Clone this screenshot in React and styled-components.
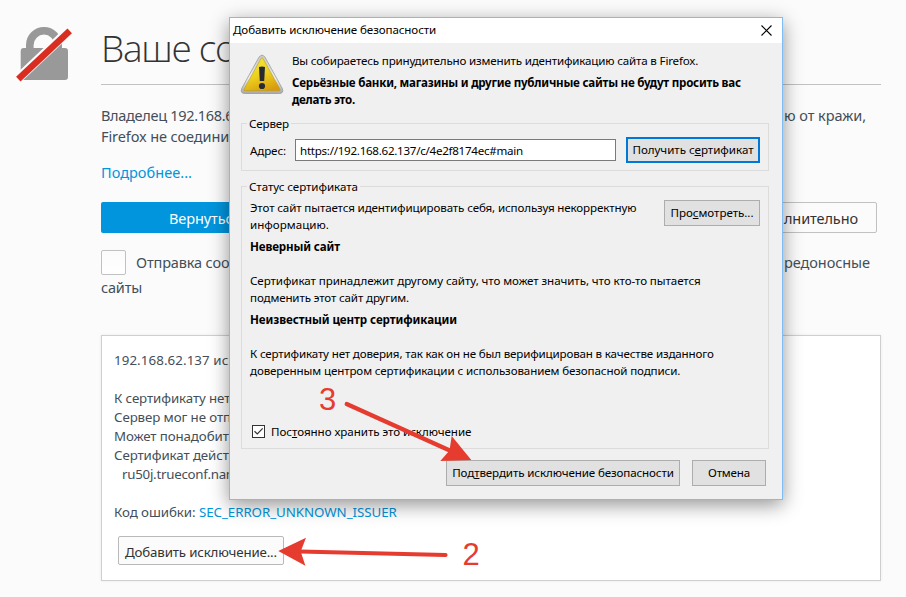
import React from "react";
import styled, { createGlobalStyle } from "styled-components";

const GlobalStyle = createGlobalStyle`
  * { box-sizing: border-box; }
  body {
    margin: 0;
    background: #fbfbfb;
    font-family: "Noto Sans", "Open Sans", sans-serif;
  }
  p, h1, h2 { margin: 0; font-weight: 400; }
`;

/* ---------- error page ---------- */

const Screen = styled.div`
  position: relative;
  width: 906px;
  height: 597px;
  overflow: hidden;
  background: #fbfbfb;
`;

const Page = styled.main`
  display: grid;
  grid-template-columns: 85px 780px;
  column-gap: 0;
  padding-left: 16px;
`;

const LockColumn = styled.div`
  padding-top: 25px;
  svg { display: block; }
`;

const Content = styled.div`
  display: flex;
  flex-direction: column;
  padding-top: 24px;
`;

const Heading = styled.h1`
  height: 61px;
  border-bottom: 1px solid #c1c1c1;
  font: 300 37px/48px "Open Sans", "Noto Sans", sans-serif;
  letter-spacing: -1.3px;
  color: #333;
`;

const Intro = styled.div`
  display: flex;
  flex-direction: column;
  padding-top: 20px;
`;

const PageLine = styled.div`
  display: flex;
  justify-content: space-between;
  align-items: center;
  width: ${(p) => p.$width || 780}px;
  height: ${(p) => p.$height || 21}px;
`;

const Copy = styled.span`
  font-size: ${(p) => p.$size || 14.5}px;
  line-height: ${(p) => p.$line || 21}px;
  letter-spacing: ${(p) => p.$track || 0}px;
  color: ${(p) => p.$color || "#424f5a"};
  white-space: pre;
`;

const MoreLink = styled.a`
  margin-top: 15px;
  font-size: 14.5px;
  line-height: 21px;
  letter-spacing: 0.04px;
  color: #0095dd;
`;

const Actions = styled.div`
  display: flex;
  justify-content: space-between;
  width: 776px;
  margin-top: 19px;
`;

const PageButton = styled.button`
  display: flex;
  align-items: center;
  justify-content: ${(p) => (p.$primary ? "flex-start" : "flex-end")};
  width: ${(p) => (p.$primary ? 300 : 150)}px;
  height: 31px;
  padding: ${(p) => (p.$primary ? "2px 0 0 68px" : "2px 18px 0 0")};
  border: ${(p) => (p.$primary ? "0" : "1px solid #c1c1c1")};
  border-radius: 2px;
  background: ${(p) => (p.$primary ? "#0095dd" : "#fbfbfb")};
  color: ${(p) => (p.$primary ? "#fff" : "#333")};
  font: 14.5px/21px "Noto Sans", sans-serif;
  letter-spacing: -0.1px;
`;

const Report = styled.div`
  display: flex;
  flex-direction: column;
  padding-top: 17px;
`;

const PageCheckbox = styled.span`
  width: 25px;
  height: 25px;
  margin-right: 10px;
  border: 1px solid #c1c1c1;
  border-radius: 2px;
  background: linear-gradient(#fbfbfb, #fff);
`;

const Option = styled.div`
  display: flex;
`;

const Details = styled.section`
  display: flex;
  flex-direction: column;
  align-items: flex-start;
  width: 780px;
  height: 246px;
  margin-top: 36px;
  padding: 15px 12px;
  border: 1px solid #cfcfcf;
  background: #fff;
  box-shadow: 0 0 3px rgba(0, 0, 0, 0.07);
`;

const DetailLine = styled.p`
  height: 19px;
  margin-top: ${(p) => p.$gap || 0}px;
  padding-left: ${(p) => p.$indent || 0}px;
  font-size: 13.3px;
  line-height: 19px;
  letter-spacing: ${(p) => p.$track ?? -0.1}px;
  color: #424f5a;
  white-space: pre;
`;

const ErrorCode = styled.a`
  color: #0095dd;
  letter-spacing: -0.04px;
`;

const ExceptionButton = styled.button`
  width: 166px;
  height: 30px;
  margin: 14px 0 0 4px;
  padding: 3px 0 0 6px;
  border: 1px solid #b9b9b9;
  border-radius: 2px;
  background: #fbfbfb;
  color: #333;
  font: 13.3px/19px "Noto Sans", sans-serif;
  letter-spacing: -0.155px;
  text-align: left;
`;

/* ---------- dialog ---------- */

const Dialog = styled.div`
  position: absolute;
  left: 229px;
  top: 17px;
  width: 554px;
  height: 483px;
  display: flex;
  flex-direction: column;
  border: 1px solid #7fbcf3;
  background: #f0f0f0;
  box-shadow: 0 5px 18px rgba(0, 0, 0, 0.42);
  color: #000;
`;

const TitleBar = styled.header`
  display: flex;
  justify-content: space-between;
  align-items: flex-start;
  height: 25px;
  padding: 3px 10px 0 3px;
  background: #fff;
  svg { display: block; margin-top: 4px; }
`;

const Line = styled.p`
  height: 17px;
  margin-top: ${(p) => p.$gap || 0}px;
  font-size: 11.6px;
  line-height: 17px;
  font-weight: ${(p) => (p.$bold ? 700 : 400)};
  letter-spacing: ${(p) => p.$track || 0}px;
  white-space: pre;
`;

const Warning = styled.div`
  display: flex;
  gap: 8px;
  height: 80px;
  padding: 9px 0 0 10px;
  svg { display: block; margin-top: 2px; }
`;

const Group = styled.section`
  width: 528px;
  height: ${(p) => p.$height}px;
  margin: ${(p) => p.$gap || 0}px 0 0 11px;
  border: 1px solid #dcdcdc;
`;

const Legend = styled.h2`
  width: max-content;
  height: 17px;
  margin: -9px 0 0 5px;
  padding: 0 2px;
  background: #f0f0f0;
  font-size: 11.6px;
  line-height: 17px;
  letter-spacing: ${(p) => p.$track}px;
`;

const AddressRow = styled.div`
  display: flex;
  align-items: center;
  height: 26px;
  margin-top: 5px;
  padding-left: 8px;
`;

const AddressLabel = styled(Line)`
  width: 45px;
`;

const AddressField = styled.div`
  width: 321px;
  height: 22px;
  margin-right: 10px;
  padding: 2px 4px;
  border: 1px solid #7a7a7a;
  background: #fff;
`;

const DialogButton = styled.button`
  display: flex;
  justify-content: center;
  align-items: center;
  flex: none;
  width: ${(p) => p.$width}px;
  height: 26px;
  padding: 0 0 ${(p) => p.$lift || 0}px 0;
  border: ${(p) => (p.$focus ? "2px solid #0078d7" : "1px solid #adadad")};
  background: #e1e1e1;
  color: #000;
  font: 11.6px/17px "Noto Sans", sans-serif;
  letter-spacing: ${(p) => p.$track}px;
  white-space: pre;
`;

const AccessKey = styled.span`
  text-decoration: underline;
  text-decoration-thickness: 1px;
  text-underline-offset: 1px;
  text-decoration-skip-ink: none;
`;

const StatusBody = styled.div`
  padding-left: 8px;
`;

const StatusTop = styled.div`
  display: flex;
  justify-content: space-between;
  height: 39px;
  padding: 4px 8px 0 0;
  button { margin-top: 1px; }
`;

const KeepRow = styled.label`
  display: flex;
  align-items: center;
  gap: 6px;
  height: 17px;
  margin: 44px 0 0 2px;
  svg { display: block; }
`;

const Footer = styled.footer`
  display: flex;
  justify-content: flex-end;
  gap: 12px;
  padding: 11px 16px 0 0;
`;

/* ---------- annotations ---------- */

const Arrows = styled.svg`
  position: absolute;
  left: 0;
  top: 0;
  pointer-events: none;
`;

const StepNumber = styled.span`
  position: absolute;
  left: ${(p) => p.$x}px;
  top: ${(p) => p.$y}px;
  font: 31px/34px "Liberation Sans", Arial, sans-serif;
  color: #e63b2f;
`;

const CrossedLock = () => (
  <svg width="58" height="58" viewBox="0 0 58 58">
    <path d="M13.800 25V20a14.200 14.200 0 0 1 28.400 0V25" fill="none" stroke="#999" strokeWidth="7.600" />
    <rect x="4.700" y="23" width="47.300" height="32" rx="3" fill="#999" />
    <path d="M2.500 53 57 1.700" stroke="#fbfbfb" strokeWidth="9.400" />
    <path d="M2.300 54.200 53.700 5.800" stroke="#d92d21" strokeWidth="6.500" />
  </svg>
);

const WarningTriangle = () => (
  <svg width="44" height="42" viewBox="0 0 44 42">
    <defs>
      <linearGradient id="rim" x1="0" y1="0" x2="0" y2="1">
        <stop offset="0" stopColor="#c9c9c9" />
        <stop offset="0.6" stopColor="#ededed" />
        <stop offset="1" stopColor="#a8a8a8" />
      </linearGradient>
      <linearGradient id="face" x1="0.3" y1="0" x2="0.7" y2="1">
        <stop offset="0" stopColor="#f5e637" />
        <stop offset="0.5" stopColor="#ecd11f" />
        <stop offset="1" stopColor="#d99a0c" />
      </linearGradient>
    </defs>
    <path d="M19 3.200Q22 -.800 25 3.200L42.300 34.500Q44 39.300 39.500 39.500H4.500Q0 39.300 1.700 34.500Z" fill="url(#rim)" stroke="#999" strokeWidth="0.8" />
    <path d="M21 4.500Q22 3 23 4.500L40 35.200Q40.500 36.700 39 36.700H5Q3.500 36.700 4 35.200Z" fill="url(#face)" stroke="#b99a1c" strokeWidth="0.6" />
    <path d="M19 13Q22 11.800 25 13L24.200 27H19.800Z" fill="#272b31" />
    <circle cx="22" cy="32" r="3.100" fill="#272b31" />
  </svg>
);

export default function App() {
  return (
    <Screen>
      <GlobalStyle />
      <Page>
        <LockColumn>
          <CrossedLock />
        </LockColumn>
        <Content>
          <Heading>Ваше со</Heading>
          <Intro>
            <PageLine $width={765}>
              <Copy $track={-0.3}>Владелец 192.168.6</Copy>
              <Copy $track={-0.05}>ю от кражи,</Copy>
            </PageLine>
            <PageLine>
              <Copy $track={-0.1}>Firefox не соедини</Copy>
            </PageLine>
          </Intro>
          <MoreLink>Подробнее...</MoreLink>
          <Actions>
            <PageButton $primary>Вернутьс</PageButton>
            <PageButton>лнительно</PageButton>
          </Actions>
          <Report>
            <PageLine $width={769} $height={25}>
              <Option>
                <PageCheckbox />
                <Copy $line={24} $track={-0.14}>Отправка соо</Copy>
              </Option>
              <Copy $line={25} $track={-0.065}>редоносные</Copy>
            </PageLine>
            <PageLine $height={24}>
              <Copy $line={23} $track={-0.19}>сайты</Copy>
            </PageLine>
          </Report>
          <Details>
            <DetailLine $track={0.1}>192.168.62.137 ис</DetailLine>
            <DetailLine $gap={19}>К сертификату нет</DetailLine>
            <DetailLine>Сервер мог не отп</DetailLine>
            <DetailLine>Может понадобит</DetailLine>
            <DetailLine>Сертификат дейст</DetailLine>
            <DetailLine $indent={8} $track={-0.25}>ru50j.trueconf.nam</DetailLine>
            <DetailLine $gap={19} $track={-0.06}>
              Код ошибки: <ErrorCode>SEC_ERROR_UNKNOWN_ISSUER</ErrorCode>
            </DetailLine>
            <ExceptionButton>Добавить исключение...</ExceptionButton>
          </Details>
        </Content>
      </Page>

      <Dialog>
        <TitleBar>
          <Line $track={-0.105}>Добавить исключение безопасности</Line>
          <svg width="11" height="11" viewBox="0 0 11 11">
            <path d="M.5 .5 10.500 10.500M10.500 .5 .5 10.500" stroke="#000" strokeWidth="1.100" />
          </svg>
        </TitleBar>
        <Warning>
          <WarningTriangle />
          <div>
            <Line $track={-0.177}>Вы собираетесь принудительно изменить идентификацию сайта в Firefox.</Line>
            <Line $bold $gap={5} $track={-0.233}>Серьёзные банки, магазины и другие публичные сайты не будут просить вас</Line>
            <Line $bold $track={-0.28}>делать это.</Line>
          </div>
        </Warning>

        <Group $height={48}>
          <Legend $track={-0.143}>Сервер</Legend>
          <AddressRow>
            <AddressLabel $track={-0.12}>Адрес:</AddressLabel>
            <AddressField>
              <Line $track={-0.275}>https://192.168.62.137/c/4e2f8174ec#main</Line>
            </AddressField>
            <DialogButton $focus $lift={2} $width={134} $track={-0.043}>
              Получить с<AccessKey>е</AccessKey>ртификат
            </DialogButton>
          </AddressRow>
        </Group>

        <Group $height={263} $gap={15}>
          <Legend $track={-0.07}>Статус сертификата</Legend>
          <StatusBody>
            <StatusTop>
              <div>
                <Line $track={-0.138}>Этот сайт пытается идентифицировать себя, используя некорректную</Line>
                <Line>информацию.</Line>
              </div>
              <DialogButton $lift={2} $width={96} $track={-0.044}>
                Про<AccessKey>с</AccessKey>мотреть...
              </DialogButton>
            </StatusTop>
            <Line $bold $gap={4} $track={-0.138}>Неверный сайт</Line>
            <Line $gap={17} $track={-0.087}>Сертификат принадлежит другому сайту, что может значить, что кто-то пытается</Line>
            <Line $track={-0.149}>подменить этот сайт другим.</Line>
            <Line $bold $gap={5} $track={-0.084}>Неизвестный центр сертификации</Line>
            <Line $gap={17} $track={-0.171}>К сертификату нет доверия, так как он не был верифицирован в качестве изданного</Line>
            <Line $track={-0.12}>доверенным центром сертификации с использованием безопасной подписи.</Line>
            <KeepRow>
              <svg width="13" height="13" viewBox="0 0 13 13">
                <rect x="0.5" y="0.5" width="12" height="12" fill="#fff" stroke="#333" />
                <path d="M2.500 6.300 5.300 9 10.700 3.400" fill="none" stroke="#333" strokeWidth="1.200" />
              </svg>
              <Line $track={-0.056}>
                Пос<AccessKey>т</AccessKey>оянно хранить это исключение
              </Line>
            </KeepRow>
          </StatusBody>
        </Group>

        <Footer>
          <DialogButton $lift={1} $width={234} $track={-0.123}>
            Под<AccessKey>т</AccessKey>вердить исключение безопасности
          </DialogButton>
          <DialogButton $lift={1} $width={74} $track={-0.184}>Отмена</DialogButton>
        </Footer>
      </Dialog>

      <Arrows width="906" height="597" viewBox="0 0 906 597" fill="#e63b2f" stroke="#e63b2f">
        <path d="M346.700 404 452 451.500" strokeWidth="4.200" strokeLinecap="round" />
        <path d="M471.300 460 440.300 461 449.500 450.500 451.700 436Z" stroke="none" />
        <path d="M445.500 555 300 551.500" strokeWidth="4.200" strokeLinecap="round" />
        <path d="M278.300 551 306 537.700 300.700 551.500 305.400 565.700Z" stroke="none" />
      </Arrows>
      <StepNumber $x={319} $y={383}>3</StepNumber>
      <StepNumber $x={462.500} $y={538}>2</StepNumber>
    </Screen>
  );
}
